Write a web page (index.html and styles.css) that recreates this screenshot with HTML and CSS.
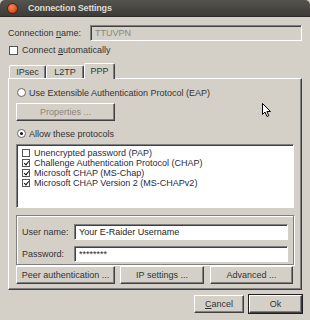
FILE: index.html
```html
<!DOCTYPE html>
<html lang="en">
<head>
  <meta charset="UTF-8">
  <title>Connection Settings</title>
  <link rel="stylesheet" href="styles.css">
</head>
<body>

  <div class="window">
    <div class="titlebar">
      <span class="close"></span>
      <span class="title">Connection Settings</span>
    </div>

    <div class="dialog">
      <div class="name-row">
        <span class="name-label">Connection <u>n</u>ame:</span>
        <div class="field disabled">TTUVPN</div>
      </div>

      <div class="check-row">
        <span class="check"></span>
        <span>Connect <u>a</u>utomatically</span>
      </div>

      <div class="tabs">
        <div class="tab tab-ipsec">IPsec</div>
        <div class="tab tab-l2tp">L2TP</div>
        <div class="tab tab-ppp active">PPP</div>
      </div>

      <div class="pane">
        <div class="radio-row">
          <span class="radio"></span>
          <span>Use Extensible Authentication Protocol (EAP)</span>
        </div>

        <button class="btn btn-props" disabled>Properties ...</button>

        <div class="radio-row allow">
          <span class="radio on"></span>
          <span>Allow these protocols</span>
        </div>

        <div class="listbox">
          <div class="item"><span class="check small"></span>Unencrypted password (PAP)</div>
          <div class="item"><span class="check small on"></span>Challenge Authentication Protocol (CHAP)</div>
          <div class="item"><span class="check small on"></span>Microsoft CHAP (MS-Chap)</div>
          <div class="item"><span class="check small on"></span>Microsoft CHAP Version 2 (MS-CHAPv2)</div>
        </div>

        <div class="group">
          <span class="group-label">User name:</span>
          <div class="field">Your E-Raider Username</div>
          <span class="group-label">Password:</span>
          <div class="field">********</div>
        </div>

        <div class="pane-buttons">
          <button class="btn btn-peer">Peer authentication ...</button>
          <button class="btn btn-ip">IP settings ...</button>
          <button class="btn btn-adv">Advanced ...</button>
        </div>
      </div>

      <div class="actions">
        <button class="btn btn-cancel"><u>C</u>ancel</button>
        <button class="btn btn-ok">Ok</button>
      </div>
    </div>

    <!-- mouse pointer from the screenshot -->
    <svg class="pointer" width="10" height="15" viewBox="0 0 10 15">
      <path d="M0.5 0.5 L0.5 11.5 L3 9 L5 13.5 L6.8 12.7 L4.9 8.5 L8.5 8.5 Z" fill="#fff" stroke="#000" stroke-width="1"/>
    </svg>
  </div>

</body>
</html>
```

FILE: styles.css
```css
* {
  box-sizing: border-box;
}

body {
  margin: 0;
  background: #d4d0c8;
  font-family: "Liberation Sans", Arial, sans-serif;
  font-size: 9px;
  color: #333;
}

u {
  text-decoration: underline;
  text-underline-offset: 1px;
}

.window {
  position: relative;
  width: 310px;
  height: 320px;
  background: #d4d0c8;
  overflow: hidden;
  white-space: nowrap;
}

.titlebar {
  height: 17px;
  display: flex;
  align-items: center;
  padding-left: 7px;
  background: linear-gradient(#55534e, #3c3b37);
  border-radius: 5px 5px 0 0;
  border-bottom: 1px solid #2b2a27;
}

.close {
  width: 11px;
  height: 11px;
  border-radius: 50%;
  background: radial-gradient(circle at 40% 35%, #f5895a, #dd4814 70%, #b33a0e);
  border: 1px solid #2e2d2a;
  margin-right: 10px;
}

.title {
  color: #dfdbd2;
  font-weight: bold;
  font-size: 9px;
  letter-spacing: -0.2px;
}

.dialog {
  padding: 8px 8px 0 8px;
}

.name-row {
  display: flex;
  align-items: center;
  height: 16px;
}

.name-label {
  width: 82px;
}

.field {
  flex: 1;
  height: 16px;
  line-height: 14px;
  padding-left: 4px;
  background: #fff;
  color: #1e1e1e;
  border-top: 1px solid #808080;
  border-left: 1px solid #808080;
  border-right: 1px solid #fff;
  border-bottom: 1px solid #fff;
  box-shadow: inset 1px 1px 0 #404040;
}

.field.disabled {
  background: #d4d0c8;
  color: #8a8680;
}

.check-row {
  display: flex;
  align-items: center;
  margin-top: 4px;
  margin-left: 1px;
  height: 10px;
}

.check {
  flex: none;
  width: 9px;
  height: 9px;
  background: #fff;
  border: 1px solid #555;
  margin-right: 4px;
  position: relative;
}

.check.small {
  width: 8px;
  height: 8px;
  margin-right: 4px;
}

.check.on::after {
  content: "";
  position: absolute;
  left: 1px;
  top: 0px;
  width: 2px;
  height: 4px;
  border: solid #111;
  border-width: 0 1.5px 1.5px 0;
  transform: translate(1px, 0) rotate(40deg);
}

.tabs {
  display: flex;
  align-items: flex-end;
  margin-top: 8px;
  margin-left: 1px;
  height: 15px;
}

.tab {
  height: 13px;
  line-height: 12px;
  text-align: center;
  border-top: 1px solid #fff;
  border-left: 1px solid #fff;
  border-right: 1px solid #404040;
  box-shadow: inset -1px 0 0 #808080;
  border-radius: 2px 2px 0 0;
}

.tab-ipsec { width: 37px; }
.tab-l2tp { width: 38px; }
.tab-ppp { width: 31px; }

.tab.active {
  height: 16px;
  line-height: 14px;
  margin-bottom: -1px;
  background: #d4d0c8;
  position: relative;
}

.pane {
  height: 212px;
  padding: 9px 7px 0 7px;
  border-top: 1px solid #fff;
  border-left: 1px solid #fff;
  border-right: 1px solid #404040;
  border-bottom: 1px solid #404040;
  box-shadow: inset -1px -1px 0 #808080;
}

.radio-row {
  display: flex;
  align-items: center;
  height: 9px;
  margin-left: 1px;
}

.radio {
  flex: none;
  width: 9px;
  height: 9px;
  border-radius: 50%;
  background: #fff;
  border: 1px solid #666;
  margin-right: 3px;
  position: relative;
}

.radio.on::after {
  content: "";
  position: absolute;
  left: 2px;
  top: 2px;
  width: 3px;
  height: 3px;
  border-radius: 50%;
  background: #111;
}

.allow {
  margin-top: 8px;
}

.btn {
  display: block;
  height: 18px;
  padding: 0;
  font-family: inherit;
  font-size: 9px;
  color: #333;
  background: #d4d0c8;
  border-top: 1px solid #fff;
  border-left: 1px solid #fff;
  border-right: 1px solid #404040;
  border-bottom: 1px solid #404040;
  box-shadow: inset -1px -1px 0 #808080;
}

.btn:disabled {
  color: #8a8680;
}

.btn-props {
  width: 99px;
  margin-top: 6px;
}

.listbox {
  height: 64px;
  margin-top: 6px;
  padding: 3px 0 0 5px;
  background: #fff;
  color: #1f2a44;
  border-top: 1px solid #808080;
  border-left: 1px solid #808080;
  border-right: 1px solid #fff;
  border-bottom: 1px solid #fff;
  box-shadow: inset 1px 1px 0 #404040;
}

.item {
  display: flex;
  align-items: center;
  height: 10px;
}

.group {
  display: grid;
  grid-template-columns: 52px 1fr;
  row-gap: 2px;
  align-items: center;
  height: 50px;
  margin-top: 7px;
  padding: 6px 5px 0 5px;
  border: 1px solid #808080;
  box-shadow: 1px 1px 0 #fff, inset 1px 1px 0 #fff;
}

.pane-buttons {
  display: flex;
  margin-top: 1px;
}

.btn-peer { width: 99px; }
.btn-ip { width: 84px; margin-left: 5px; }
.btn-adv { width: 83px; margin-left: 6px; }

.actions {
  display: flex;
  justify-content: flex-end;
  margin-top: 5px;
}

.btn-cancel {
  width: 50px;
}

.btn-ok {
  width: 53px;
  margin-left: 5px;
  outline: 1px solid #202020;
  outline-offset: 0;
}

.pointer {
  position: absolute;
  left: 262px;
  top: 103px;
}
```
